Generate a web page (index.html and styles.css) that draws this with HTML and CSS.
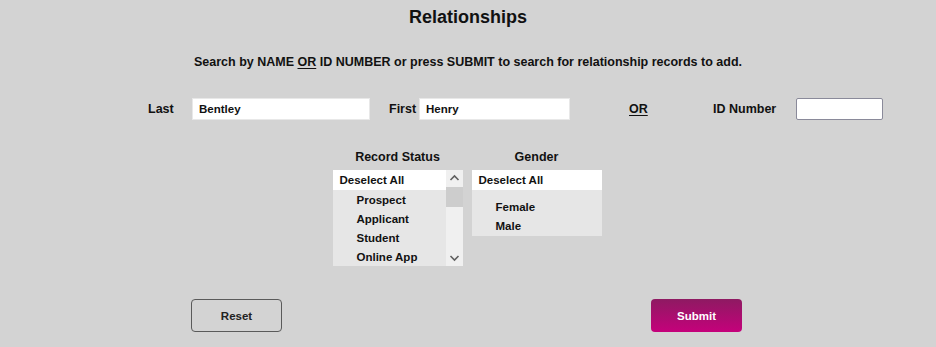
FILE: index.html
```html
<!DOCTYPE html>
<html>
<head>
<meta charset="utf-8">
<link rel="stylesheet" href="styles.css">
</head>
<body>
<div class="page">
  <h1 class="title">Relationships</h1>
  <p class="intro">Search by NAME <u>OR</u> ID NUMBER or press SUBMIT to search for relationship records to add.</p>
  <div class="search-row">
    <label class="lbl lbl-last">Last</label>
    <input class="txt txt-last" type="text" value="Bentley">
    <label class="lbl lbl-first">First</label>
    <input class="txt txt-first" type="text" value="Henry">
    <div class="or-cell"><u>OR</u></div>
    <label class="lbl lbl-id">ID Number</label>
    <input class="txt txt-id" type="text" value="">
  </div>
  <div class="lists">
    <div class="list-col">
      <div class="list-title">Record Status</div>
      <div class="listbox status-box">
        <div class="list-items">
          <div class="list-head">Deselect All</div>
          <div class="item">Prospect</div>
          <div class="item">Applicant</div>
          <div class="item">Student</div>
          <div class="item">Online App</div>
        </div>
        <div class="scrollbar">
          <svg class="arrow" width="17" height="17" viewBox="0 0 17 17"><path d="M4.5 10 L8.5 6 L12.5 10" fill="none" stroke="#606060" stroke-width="1.6"/></svg>
          <div class="thumb"></div>
          <div class="track"></div>
          <svg class="arrow" width="17" height="17" viewBox="0 0 17 17"><path d="M4.5 7 L8.5 11 L12.5 7" fill="none" stroke="#606060" stroke-width="1.6"/></svg>
        </div>
      </div>
    </div>
    <div class="list-col">
      <div class="list-title">Gender</div>
      <div class="listbox gender-box">
        <div class="list-items">
          <div class="list-head">Deselect All</div>
          <div class="spacer"></div>
          <div class="item">Female</div>
          <div class="item">Male</div>
        </div>
      </div>
    </div>
  </div>
  <div class="buttons">
    <button class="btn btn-reset">Reset</button>
    <button class="btn btn-submit">Submit</button>
  </div>
</div>
</body>
</html>
```
FILE: styles.css
```css
html, body {
  margin: 0;
  padding: 0;
  background: #d3d3d3;
}
body {
  font-family: "Liberation Sans", Arial, sans-serif;
  font-weight: bold;
  color: #111;
  width: 936px;
  height: 347px;
  overflow: hidden;
}
.page {
  display: flex;
  flex-direction: column;
}
.title {
  margin: 5px 0 0;
  height: 24px;
  line-height: 24px;
  font-size: 18px;
  text-align: center;
}
.intro {
  margin: 25px 0 0;
  height: 16px;
  line-height: 16px;
  font-size: 12.5px;
  text-align: center;
}
.intro u, .or-cell u {
  text-underline-offset: 2px;
}
.search-row {
  display: flex;
  align-items: center;
  margin-top: 28px;
  padding-left: 140px;
  height: 22px;
}
.lbl {
  font-size: 12.5px;
  box-sizing: border-box;
}
.lbl-last {
  width: 52px;
  padding-left: 8px;
}
.txt {
  box-sizing: border-box;
  height: 22px;
  border: 1px solid #e8e8e8;
  background: #fff;
  font-family: inherit;
  font-weight: bold;
  font-size: 11.5px;
  color: #111;
  padding: 0 0 0 6px;
  margin: 0;
  outline: none;
}
.txt-last { width: 178px; }
.lbl-first {
  width: 49px;
  padding-left: 19px;
}
.txt-first { width: 151px; }
.or-cell {
  width: 143px;
  padding-left: 59px;
  box-sizing: border-box;
  font-size: 12.5px;
}
.lbl-id {
  width: 83px;
}
.txt-id {
  width: 87px;
  border: 1px solid #8a8a9a;
  border-radius: 2px;
}
.lists {
  display: flex;
  justify-content: center;
  gap: 9px;
  margin-top: 29px;
  padding-right: 2px;
}
.list-col {
  width: 130px;
  display: flex;
  flex-direction: column;
  align-items: center;
}
.list-title {
  font-size: 12.5px;
  height: 16px;
  line-height: 16px;
  margin-bottom: 5px;
}
.listbox {
  width: 130px;
  display: flex;
  background: #e6e6e6;
}
.status-box { height: 96px; }
.gender-box { height: 66px; }
.list-items {
  flex: 1;
  display: flex;
  flex-direction: column;
  font-size: 11.5px;
}
.list-head {
  background: #fff;
  height: 20px;
  line-height: 20px;
  padding-left: 7px;
}
.status-box .list-head { margin-right: -17px; position: relative; z-index: 0; }
.item {
  height: 19px;
  line-height: 19px;
  padding-left: 24px;
}
.status-box .item { line-height: 21px; }
.spacer { height: 10px; }
.scrollbar {
  width: 17px;
  display: flex;
  flex-direction: column;
  background: #f0f0f0;
  position: relative;
  z-index: 1;
}
.arrow {
  display: block;
  width: 17px;
  height: 17px;
  flex: none;
}
.thumb {
  height: 20px;
  background: #cdcdcd;
  flex: none;
}
.track { flex: 1; }
.buttons {
  display: flex;
  gap: 369px;
  padding-left: 191px;
  margin-top: 33px;
}
.btn {
  width: 91px;
  height: 33px;
  border-radius: 4px;
  font-family: "Liberation Sans", Arial, sans-serif;
  font-weight: bold;
  font-size: 11.5px;
  margin: 0;
  padding: 0;
}
.btn-reset {
  background: transparent;
  border: 1px solid #5a5a5a;
  color: #222;
}
.btn-submit {
  border: none;
  color: #fff;
  background: linear-gradient(to bottom, #8e1a62, #c5017b);
}
```
